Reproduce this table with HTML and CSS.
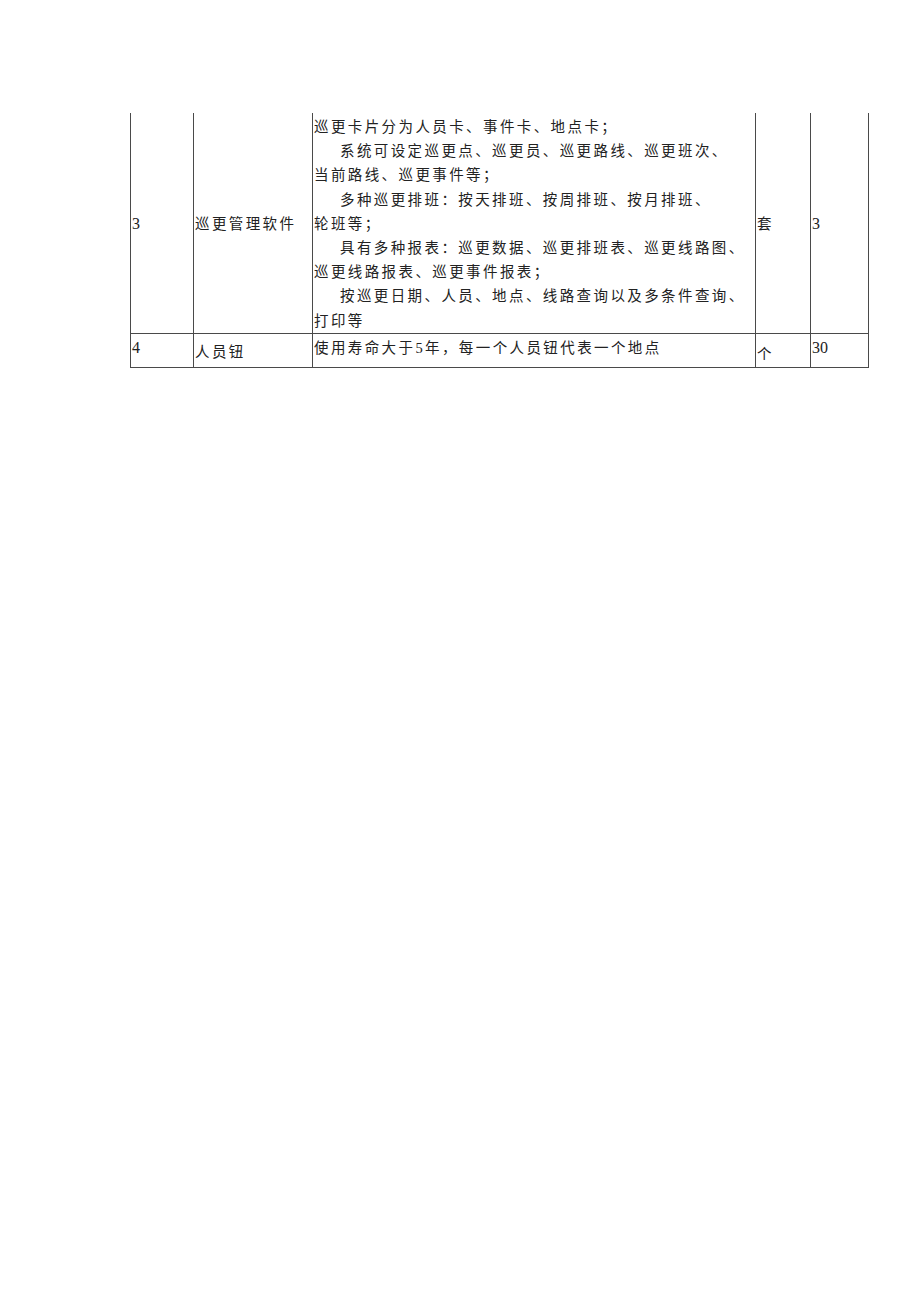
FILE: index.html
```html
<!DOCTYPE html>
<html lang="zh">
<head>
<meta charset="utf-8">
<link rel="stylesheet" href="styles.css">
</head>
<body>
<div class="page">
  <table class="spec">
    <colgroup>
      <col class="c-no">
      <col class="c-name">
      <col class="c-desc">
      <col class="c-unit">
      <col class="c-qty">
    </colgroup>
    <tr class="row-tall">
      <td class="mid num">3</td>
      <td class="mid">巡更管理软件</td>
      <td class="desc">
        <p>巡更卡片分为人员卡、事件卡、地点卡；</p>
        <p class="ind">系统可设定巡更点、巡更员、巡更路线、巡更班次、</p>
        <p>当前路线、巡更事件等；</p>
        <p class="ind">多种巡更排班：按天排班、按周排班、按月排班、</p>
        <p>轮班等；</p>
        <p class="ind">具有多种报表：巡更数据、巡更排班表、巡更线路图、</p>
        <p>巡更线路报表、巡更事件报表；</p>
        <p class="ind">按巡更日期、人员、地点、线路查询以及多条件查询、</p>
        <p>打印等</p>
      </td>
      <td class="mid">套</td>
      <td class="mid green num">3</td>
    </tr>
    <tr class="row-short">
      <td class="top num">4</td>
      <td class="low">人员钮</td>
      <td class="top">使用寿命大于5年，每一个人员钮代表一个地点</td>
      <td class="lower">个</td>
      <td class="top green num">30</td>
    </tr>
  </table>
</div>
</body>
</html>
```
FILE: styles.css
```css
html, body {
  margin: 0;
  padding: 0;
  background: #ffffff;
}
.page {
  width: 920px;
  height: 1301px;
  padding: 113px 0 0 130px;
  box-sizing: border-box;
}
.spec {
  border-collapse: collapse;
  table-layout: fixed;
  width: 738px;
  font-family: "Liberation Serif", "Noto Sans CJK SC", serif;
  font-size: 14.5px;
  letter-spacing: 2.4px;
  color: #222;
}
.c-no { width: 63px; }
.c-name { width: 119px; }
.c-desc { width: 443px; }
.c-unit { width: 55px; }
.c-qty { width: 58px; }
.spec td {
  border: 1px solid #4a4a4a;
  padding: 0 0 0 1px;
  line-height: 24.2px;
  vertical-align: top;
  white-space: nowrap;
}
.spec td.num {
  font-size: 16px;
  letter-spacing: 0;
}
.spec tr.row-tall td {
  border-top: none;
}
.spec td.green {
  border-left-color: #7f9c7f;
}
.spec td.mid {
  vertical-align: middle;
  padding-top: 2px;
}
.spec td.desc {
  padding-top: 2px;
  padding-bottom: 0;
}
.desc p {
  margin: 0;
}
.desc p.ind {
  text-indent: 26px;
}
.row-short {
  height: 34px;
}
.spec .row-short td {
  line-height: 24px;
}
.spec td.top {
  padding-top: 2px;
}
.spec td.low {
  padding-top: 6px;
}
.spec td.lower {
  padding-top: 8px;
}
```
